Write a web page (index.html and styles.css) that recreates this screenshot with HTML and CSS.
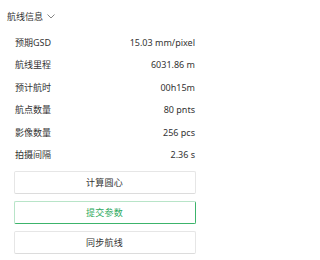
FILE: index.html
```html
<!DOCTYPE html>
<html lang="zh">
<head>
<meta charset="utf-8">
<link rel="stylesheet" href="styles.css">
</head>
<body>
<div class="panel">
  <div class="title">
    <span>航线信息</span>
    <svg class="chev" width="8" height="5" viewBox="0 0 8 5"><polyline points="0.5,0.5 4,4 7.5,0.5" fill="none" stroke="#666" stroke-width="0.8"/></svg>
  </div>
  <div class="body">
    <div class="list">
      <div class="row"><span>预期GSD</span><span>15.03 mm/pixel</span></div>
      <div class="row"><span>航线里程</span><span>6031.86 m</span></div>
      <div class="row"><span>预计航时</span><span>00h15m</span></div>
      <div class="row"><span>航点数量</span><span>80 pnts</span></div>
      <div class="row"><span>影像数量</span><span>256 pcs</span></div>
      <div class="row"><span>拍摄间隔</span><span>2.36 s</span></div>
    </div>
    <div class="actions">
      <button class="btn">计算圆心</button>
      <button class="btn primary">提交参数</button>
      <button class="btn">同步航线</button>
    </div>
  </div>
</div>
</body>
</html>
```

FILE: styles.css
```css
html, body {
  margin: 0;
  padding: 0;
  background: #fff;
}
body {
  font-family: "Noto Sans", "Noto Sans CJK SC", sans-serif;
  font-size: 9px;
  color: #333;
}
.panel {
  box-sizing: border-box;
  width: 206px;
  height: 260px;
  padding: 5px 10.5px 0 7px;
}
.title {
  display: flex;
  align-items: center;
  gap: 4px;
  height: 22px;
  color: #333;
}
.chev {
  display: block;
  margin-top: 1px;
}
.body {
  padding-left: 6.5px;
}
.list {
  padding-top: 3.75px;
}
.row {
  display: flex;
  justify-content: space-between;
  align-items: center;
  height: 22.5px;
  padding: 0 0.5px 0 1.5px;
}
.actions {
  display: flex;
  flex-direction: column;
  gap: 7px;
  margin-top: 5px;
}
.btn {
  height: 23px;
  font-family: inherit;
  font-size: 9px;
  color: #333;
  background: #fff;
  border: 1px solid #e6e6e6;
  border-bottom-color: #dcdcdc;
  border-radius: 2px;
  padding: 0;
  letter-spacing: 0.3px;
}
.btn.primary {
  color: #2eaa5e;
  border-color: #b8e4c8 #3cb46b #3cb46b #b8e4c8;
}
```
